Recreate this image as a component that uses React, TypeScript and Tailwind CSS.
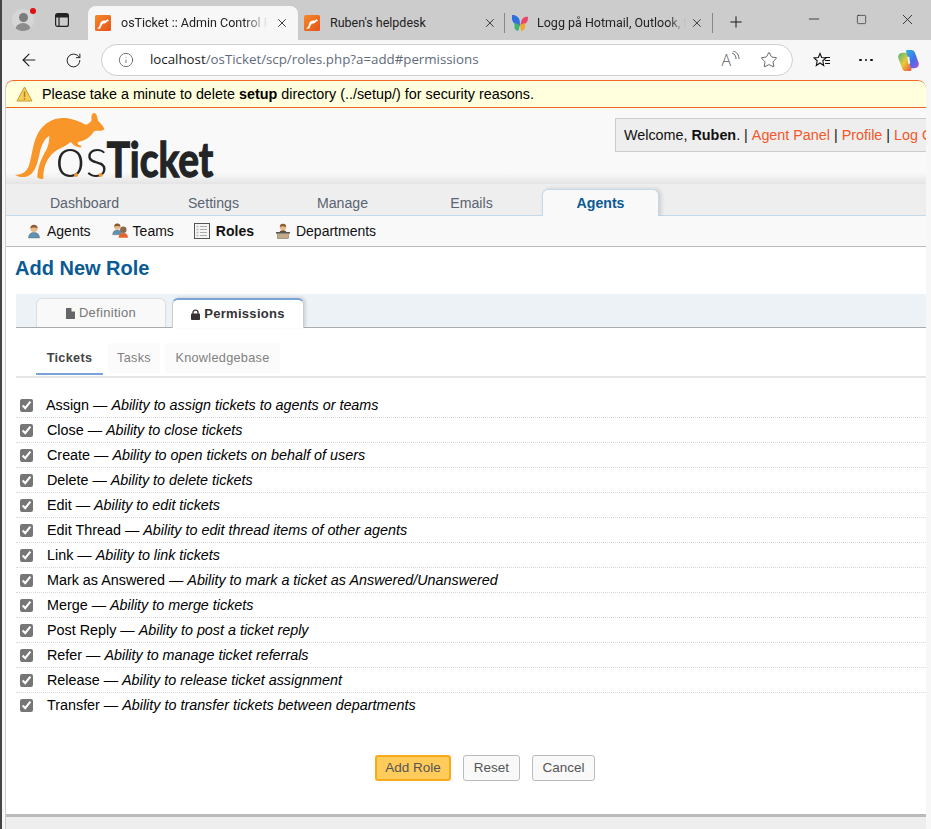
import { ArrowLeft, Info, Minus, Plus, RotateCw, Square, Star, X } from "lucide-react";

const perms = [
  ["Assign", "Ability to assign tickets to agents or teams"],
  ["Close", "Ability to close tickets"],
  ["Create", "Ability to open tickets on behalf of users"],
  ["Delete", "Ability to delete tickets"],
  ["Edit", "Ability to edit tickets"],
  ["Edit Thread", "Ability to edit thread items of other agents"],
  ["Link", "Ability to link tickets"],
  ["Mark as Answered", "Ability to mark a ticket as Answered/Unanswered"],
  ["Merge", "Ability to merge tickets"],
  ["Post Reply", "Ability to post a ticket reply"],
  ["Refer", "Ability to manage ticket referrals"],
  ["Release", "Ability to release ticket assignment"],
  ["Transfer", "Ability to transfer tickets between departments"],
];

const Kangaroo = ({ fill }: { fill: string }) => (
  <path
    fill={fill}
    d="M15 200C30 202 45 196 55 178C66 150 66 110 84 76C100 46 130 28 165 30C190 32 210 42 228 50C236 48 242 42 245 36C243 28 245 16 252 15C260 15 262 28 264 38C272 46 282 56 283 64C276 72 262 66 252 70C244 84 230 96 212 100C205 102 200 104 205 110C212 112 216 114 214 118C204 120 192 114 182 102C174 108 160 118 146 124C126 134 112 152 104 176C100 190 100 204 100 212C94 214 86 212 82 208C82 180 94 150 110 124C116 110 118 96 118 84C106 90 98 104 92 124C84 154 82 180 64 198C50 210 28 210 15 200Z"
  />
);

const Favicon = () => (
  <svg width="16" height="16" viewBox="0 0 16 16" className="shrink-0">
    <defs>
      <linearGradient id="fav" x1="0" y1="0" x2="1" y2="1">
        <stop offset="0" stopColor="#f58a2a" />
        <stop offset="1" stopColor="#e4521b" />
      </linearGradient>
    </defs>
    <rect width="16" height="16" rx="1.5" fill="url(#fav)" />
    <path
      fill="#fff"
      d="M2 13C4 13 4.500 11 5 9C5.500 6.500 7.500 5 10 5.500C11 5.800 11.500 5.500 12 4.500L12.500 4L14 6L12 6.500C11.500 8 10 8.500 8.500 8.500C7 9.500 6 11 5.500 13.500L4.500 13.500C3.500 14 2.500 13.500 2 13Z"
    />
  </svg>
);

const Butterfly = () => (
  <svg width="18" height="18" viewBox="0 0 18 18" className="shrink-0">
    <path fill="#2f6fe0" d="M1 1C4.500 0.500 8 3 8.800 7L9 11.500C6 12 2 9.500 1 5.500Z" />
    <path fill="#e8476a" d="M17 3C14.500 2 11 4 10.200 7.500L9.300 11.500C12.500 11.500 15.800 9.500 16.800 6Z" />
    <path fill="#3cb371" d="M3.500 9.500C5 9 7.500 10 8.800 11.500L7.500 16.500C5.500 17.500 3.500 15 3.500 13Z" />
    <path fill="#f5a623" d="M14 9.500C12.500 9 10.500 10 9.300 11.500L10 16.500C12 17.500 14 15 14 13Z" />
  </svg>
);

const Copilot = () => (
  <svg width="23" height="23" viewBox="0 0 24 24">
    <defs>
      <linearGradient id="cpA" x1="0" y1="0" x2="1" y2="1">
        <stop offset="0" stopColor="#2fb5ea" />
        <stop offset="0.55" stopColor="#3f6fe8" />
        <stop offset="1" stopColor="#b14fd8" />
      </linearGradient>
      <linearGradient id="cpB" x1="0" y1="0" x2="1" y2="1">
        <stop offset="0" stopColor="#49b97c" />
        <stop offset="0.5" stopColor="#e8c93a" />
        <stop offset="1" stopColor="#f0503c" />
      </linearGradient>
    </defs>
    <path fill="url(#cpB)" d="M6 4H11L15 21C15.300 22 14.500 23 13 23H9C7 23 6 22 5.500 20.500L1.500 10C0.500 7 2.500 4 6 4Z" />
    <path fill="url(#cpA)" d="M10 1H15C17 1 18 2 18.500 3.500L22.500 14C23.500 17 21.500 20 18 20H14.500L9.500 2.500C9.300 1.800 9.500 1 10 1Z" />
    <path fill="#ffffff" d="M10.800 8L12.800 8L13.800 15.500L11.800 15.500Z" opacity="0.9" />
  </svg>
);

const Person = ({ shirt, hair }: { shirt: string; hair: string }) => (
  <>
    <path fill={shirt} stroke="#5b5b5b" strokeWidth="0.4" d="M2.500 15C2.500 11.500 4.500 9.500 8 9.500C11.500 9.500 13.500 11.500 13.500 15Z" />
    <circle cx="8" cy="5.500" r="3.600" fill="#e8b88a" />
    <path fill={hair} d="M4.300 5.500C4.300 3 6 1.700 8 1.700C10 1.700 11.700 3 11.700 5.500C10 4.300 6 4.300 4.300 5.500Z" />
  </>
);

const AgentIcon = () => (
  <svg width="16" height="16" viewBox="0 0 16 16" className="shrink-0">
    <Person shirt="#5f93b5" hair="#8a5a33" />
  </svg>
);

const TeamIcon = () => (
  <svg width="17" height="16" viewBox="0 0 17 16" className="shrink-0">
    <g transform="translate(-1.500 -1) scale(0.85)">
      <Person shirt="#5f93b5" hair="#8a5a33" />
    </g>
    <g transform="translate(4.500 2) scale(0.85)">
      <path fill="#e4632e" d="M2.500 15C2.500 11.500 4.500 9.500 8 9.500C11.500 9.500 13.500 11.500 13.500 15Z" />
      <circle cx="8" cy="5.500" r="3.800" fill="#8a6a50" />
    </g>
  </svg>
);

const RolesIcon = () => (
  <svg width="16" height="16" viewBox="0 0 16 16" className="shrink-0">
    <rect x="0.500" y="0.500" width="15" height="15" fill="#f4f4f4" stroke="#555" />
    <path stroke="#aaa" strokeWidth="1" d="M6 3.500H13M6 6.500H13M6 9.500H13M6 12.500H13" />
    <path stroke="#bbb" strokeWidth="1.500" d="M2.500 3.500H4.500M2.500 6.500H4.500M2.500 9.500H4.500M2.500 12.500H4.500" />
  </svg>
);

const DeptIcon = () => (
  <svg width="16" height="16" viewBox="0 0 16 16" className="shrink-0">
    <circle cx="8" cy="4" r="3.200" fill="#e8b88a" />
    <path fill="#8a5a33" d="M4.800 4C4.800 1.800 6.300 0.800 8 0.800C9.700 0.800 11.200 1.800 11.200 4C9.700 3 6.300 3 4.800 4Z" />
    <path fill="#6a4a30" d="M4.500 10C4.500 8 6 7.300 8 7.300C10 7.300 11.500 8 11.500 10Z" />
    <rect x="1" y="9" width="14" height="1.600" fill="#555" />
    <rect x="2.500" y="10.600" width="11" height="5" fill="#c2a98a" stroke="#7a6a58" strokeWidth="0.500" />
  </svg>
);

const Logo = () => (
  <svg width="210" height="76" viewBox="0 0 630 228" className="shrink-0">
    <Kangaroo fill="#f8962a" />
    <text x="136" y="207" textLength="158" lengthAdjust="spacingAndGlyphs" fontFamily="Lato" fontWeight="300" fontSize="166" fill="#222426">
      os
    </text>
    <circle cx="198" cy="201" r="6" fill="#f8962a" />
    <circle cx="272" cy="201" r="6" fill="#f8962a" />
    <text
      x="290"
      y="208"
      textLength="320"
      lengthAdjust="spacingAndGlyphs"
      fontFamily="Lato"
      fontWeight="700"
      fontSize="146"
      fill="#222426"
      stroke="#222426"
      strokeWidth="4"
    >
      Ticket
    </text>
  </svg>
);

const ChromeTab = ({ active, w, children }: { active?: boolean; w: string; children: React.ReactNode }) => (
  <div className={`flex h-[34px] shrink-0 items-center ${w} ${active ? "rounded-t-lg bg-[#f7f7f7]" : ""}`}>
    {children}
  </div>
);

const navItems = ["Dashboard", "Settings", "Manage", "Emails"];

export default function App() {
  return (
    <div className="flex h-[829px] w-[931px] flex-col overflow-hidden border-l-2 border-[#454545] bg-[#f7f7f7] font-['Liberation_Sans',Arial,sans-serif] text-[14px] text-black">
      {/* browser tab strip */}
      <div className="flex h-10 shrink-0 items-end bg-[#cccccc] font-['Roboto',sans-serif] text-[12.500px] text-[#222]">
        <div className="flex h-10 w-[86px] shrink-0 items-center">
          <div className="relative ml-[10px] h-[22px] w-[22px]">
            <div className="h-[22px] w-[22px] overflow-hidden rounded-full bg-[#d6d6d6]">
              <div className="mx-auto mt-[4px] h-[9px] w-[9px] rounded-full bg-[#7c7c7c]" />
              <div className="mx-auto mt-[1px] h-[8px] w-[16px] rounded-t-full bg-[#8c8c8c]" />
            </div>
            <div className="absolute -right-[2px] -top-[1px] h-[6px] w-[6px] rounded-full bg-[#e01010]" />
          </div>
          <svg width="16" height="16" viewBox="0 0 16 16" className="ml-[20px]" fill="none" stroke="#222" strokeWidth="1.200">
            <rect x="1.600" y="1.600" width="12.800" height="12.800" rx="2" />
            <path d="M1.600 5H14.400M5 5V14.400" />
            <path d="M2 2H14V5H2Z" fill="#222" stroke="none" />
          </svg>
        </div>
        <ChromeTab active w="w-[210px]">
          <div className="ml-[7px]">
            <Favicon />
          </div>
          <span className="ml-[10px] w-[153px] overflow-hidden whitespace-nowrap [mask-image:linear-gradient(to_right,#000_80%,transparent_96%)]">
            osTicket :: Admin Control Panel
          </span>
          <X size={14} strokeWidth={1.500} className="ml-[1px]" />
        </ChromeTab>
        <ChromeTab w="w-[207px]">
          <div className="ml-[6px]">
            <Favicon />
          </div>
          <span className="ml-[10px] w-[153px] overflow-hidden whitespace-nowrap">Ruben's helpdesk</span>
          <X size={14} strokeWidth={1.500} className="ml-[2px]" />
          <div className="ml-[7px] h-5 w-px bg-[#888]" />
        </ChromeTab>
        <ChromeTab w="w-[208px]">
          <div className="ml-[6px]">
            <Butterfly />
          </div>
          <span className="ml-[8px] w-[152px] overflow-hidden whitespace-nowrap [mask-image:linear-gradient(to_right,#000_88%,transparent)]">
            Logg på Hotmail, Outlook, Microsoft
          </span>
          <X size={14} strokeWidth={1.500} className="ml-[4px]" />
          <div className="ml-[8px] h-5 w-px bg-[#888]" />
        </ChromeTab>
        <div className="flex h-10 flex-1 items-center">
          <Plus size={18} strokeWidth={1.300} className="ml-[14px] mt-[3px] text-[#111]" />
          <Minus size={16} strokeWidth={1.100} className="ml-[61px] -mt-[2px] text-[#111]" />
          <Square size={11} strokeWidth={1.300} className="ml-[34px] -mt-[2px] text-[#111]" />
          <X size={17} strokeWidth={1.100} className="ml-[32px] -mt-[2px] text-[#111]" />
        </div>
      </div>

      {/* address bar */}
      <div className="flex h-10 shrink-0 items-center bg-[#f7f7f7]">
        <ArrowLeft size={20} strokeWidth={1.400} className="ml-[17px] text-[#222]" />
        <RotateCw size={17} strokeWidth={1.400} className="ml-[26px] text-[#222]" />
        <div className="ml-[19px] flex h-[32px] w-[692px] items-center rounded-full border border-[#cfcfcf] bg-white">
          <Info size={16} strokeWidth={1.200} className="ml-[16px] text-[#555]" />
          <span className="ml-[16px] font-['Open_Sans',sans-serif] text-[13.300px] text-[#5f6b7a]">
            <span className="text-[#1a1a1a]">localhost</span>/osTicket/scp/roles.php?a=add#permissions
          </span>
          <span className="ml-auto flex items-center font-['Open_Sans',sans-serif] text-[16px] font-light text-[#666]">
            A
            <svg width="9" height="12" viewBox="0 0 9 12" fill="none" stroke="#666" className="-mt-[6px]">
              <path d="M1 2C4 3 5 5 5 8M2 0C6 1 8 4 8 8" />
            </svg>
          </span>
          <Star size={18} strokeWidth={1.100} className="ml-[20px] mr-[14px] text-[#444]" />
        </div>
        <svg width="18" height="16" viewBox="0 0 18 16" fill="none" stroke="#111" strokeWidth="1.100" className="ml-[20px]">
          <path d="M7 1.500L8.700 5.500L13 6L9.800 8.800L10.700 13.500L7 11L3.300 13.500L4.200 8.800L1 6L5.300 5.500Z" />
          <path d="M12 5.500H17M12 8.500H17M12 11.500H17" />
        </svg>
        <div className="ml-[28px] flex gap-[3px]">
          <div className="h-[2.500px] w-[2.500px] rounded-full bg-[#111]" />
          <div className="h-[2.500px] w-[2.500px] rounded-full bg-[#111]" />
          <div className="h-[2.500px] w-[2.500px] rounded-full bg-[#111]" />
        </div>
        <div className="ml-[24px]">
          <Copilot />
        </div>
      </div>

      {/* page */}
      <div className="ml-[3px] flex min-h-0 w-[921px] flex-1 flex-col overflow-hidden rounded-t-lg border-l border-[#d0d0d0] bg-white">
        <div className="-ml-px flex h-[28px] shrink-0 items-center rounded-t-lg border-y border-l border-[#f26a22] bg-[#ffffdd] text-[14.350px]">
          <svg width="17" height="16" viewBox="0 0 17 16" className="ml-[10px]">
            <path fill="#f6cf52" stroke="#c99a3a" d="M8.500 1L16 15H1Z" />
            <rect x="7.800" y="5.500" width="1.500" height="5.500" fill="#a97f24" />
            <rect x="7.800" y="12" width="1.500" height="1.500" fill="#a97f24" />
          </svg>
          <span className="ml-[9px] mt-[2px]">
            Please take a minute to delete <b>setup</b> directory (../setup/) for security reasons.
          </span>
        </div>

        {/* header */}
        <div className="flex h-[76px] shrink-0 bg-gradient-to-b from-[#f9f9f9] from-85% to-[#e4e4e4]">
          <div className="ml-[4px]">
            <Logo />
          </div>
          <div className="ml-auto mt-[10px] flex h-[34px] w-[311px] items-center overflow-hidden whitespace-nowrap border-y border-l border-[#cccccc] bg-[#eeeeee] pl-[8px] pt-[2px] text-[14.350px] text-[#111]">
            Welcome,&nbsp;<b>Ruben</b>.&nbsp;|&nbsp;<span className="text-[#f1592a]">Agent Panel</span>&nbsp;|&nbsp;
            <span className="text-[#f1592a]">Profile</span>&nbsp;|&nbsp;<span className="text-[#f1592a]">Log Out</span>
          </div>
        </div>

        {/* main nav */}
        <div className="flex h-[32px] shrink-0 items-end gap-3 border-b border-[#c3d9ec] bg-[#eeeeee] pl-[20px] text-[14.150px]">
          {navItems.map((n) => (
            <div key={n} className="flex h-[27px] w-[117px] items-center justify-center pt-[5px] text-[#5a6472]">
              {n}
            </div>
          ))}
          <div className="-mb-px flex h-[27px] w-[117px] items-center justify-center rounded-t-md border-x border-t border-[#c3d9ec] bg-[#f9f9f9] pt-[2px] font-bold text-[#0a5a94] shadow-[2px_0_4px_rgba(0,0,0,0.15)]">
            Agents
          </div>
        </div>

        {/* sub nav */}
        <div className="flex h-[31px] shrink-0 items-center border-b border-[#bbbbbb] bg-[#f9f9f9] pl-[20px] text-[#111]">
          <AgentIcon />
          <span className="ml-[5px]">Agents</span>
          <div className="ml-[21px]">
            <TeamIcon />
          </div>
          <span className="ml-[4px]">Teams</span>
          <div className="ml-[20px]">
            <RolesIcon />
          </div>
          <b className="ml-[6px]">Roles</b>
          <div className="ml-[21px]">
            <DeptIcon />
          </div>
          <span className="ml-[5px]">Departments</span>
        </div>

        {/* content */}
        <h1 className="ml-[9px] mt-[9px] shrink-0 text-[20px] font-bold leading-[24px] text-[#0a5a94]">Add New Role</h1>

        <div className="ml-[10px] mt-[14px] flex h-[34px] shrink-0 items-end border-b border-[#aaaaaa] bg-[#edf2f7] pl-[20px] text-[13px] tracking-[0.3px]">
          <div className="flex h-[29px] w-[130px] items-center justify-center gap-[4px] rounded-t-md border-x border-t border-[#dddddd] bg-[#f9f9f9] text-[#777]">
            <svg width="9" height="11" viewBox="0 0 9 11" fill="#666">
              <path d="M0 0H5.500L9 3.500V11H0ZM5.500 0V3.500H9Z" />
            </svg>
            Definition
          </div>
          <div className="-mb-px ml-[6px] flex h-[30px] w-[132px] items-center justify-center gap-[4px] rounded-t-md border-x border-t-2 border-x-[#cccccc] border-t-[#7ba4d6] bg-white font-bold text-[#333] shadow-[2px_-1px_3px_rgba(0,0,0,0.12)]">
            <svg width="9" height="11" viewBox="0 0 9 11">
              <path fill="none" stroke="#333" strokeWidth="1.300" d="M2 5V3.200C2 0.500 7 0.500 7 3.200V5" />
              <rect y="4.500" width="9" height="6.500" rx="0.800" fill="#333" />
            </svg>
            Permissions
          </div>
        </div>

        <div className="ml-[10px] mt-[18px] flex h-[32px] shrink-0 items-end gap-[5px] border-b-2 border-[#e5e5e5] pl-[20px] text-[12.700px] tracking-[0.3px]">
          <div className="mb-[1px] flex h-[30px] w-[67px] items-center justify-center border-b-2 border-[#7ba3da] pb-[1px] font-bold text-[#444]">Tickets</div>
          <div className="mb-[3px] flex h-[30px] w-[52px] items-center justify-center bg-[#fbfbfb] pt-[2px] text-[#808080]">Tasks</div>
          <div className="mb-[3px] flex h-[30px] w-[115px] items-center justify-center bg-[#fbfbfb] pt-[2px] text-[#808080]">Knowledgebase</div>
        </div>

        <div className="ml-[10px] mt-[15px] flex shrink-0 flex-col text-[14.350px]">
          {perms.map(([name, desc], i) => (
            <label key={name} className="flex h-[25px] items-center border-b border-dotted border-[#d8d8d8] pl-[4px] last:border-transparent">
              <input type="checkbox" defaultChecked className="h-[13px] w-[13px] shrink-0 accent-[#767676]" />
              <span className={`mt-[2px] ${i === 0 ? "ml-[13px]" : "ml-[14px]"}`}>
                {name} — <i>{desc}</i>
              </span>
            </label>
          ))}
        </div>

        <div className="mt-[37px] flex shrink-0 justify-center gap-3 pl-[38px] text-[13.500px]">
          <button className="h-[26px] w-[76px] rounded-[3px] border-2 border-[#f9ab17] bg-[#ffcc5c] text-[#555]">Add Role</button>
          <button className="h-[26px] w-[57px] rounded-[3px] border border-[#bbbbbb] bg-[#f9f9f9] text-[#555]">Reset</button>
          <button className="h-[26px] w-[63px] rounded-[3px] border border-[#bbbbbb] bg-[#f9f9f9] text-[#555]">Cancel</button>
        </div>

        <div className="mt-[33px] flex-1 border-t-[3px] border-[#bbbbbb] bg-[#eeeeee]" />
      </div>
    </div>
  );
}
